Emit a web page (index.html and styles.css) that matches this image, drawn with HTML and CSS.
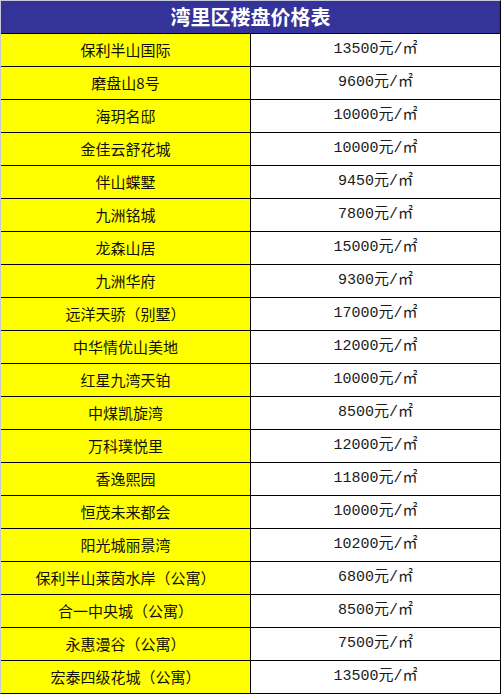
FILE: index.html
```html
<!DOCTYPE html>
<html lang="zh-CN">
<head>
<meta charset="utf-8">
<title>湾里区楼盘价格表</title>
<link rel="stylesheet" href="styles.css">
</head>
<body>
<div class="sheet">
  <div class="title">湾里区楼盘价格表</div>
  <div class="row"><div class="name">保利半山国际</div><div class="price">13500元/㎡</div></div>
  <div class="row"><div class="name">磨盘山8号</div><div class="price">9600元/㎡</div></div>
  <div class="row"><div class="name">海玥名邸</div><div class="price">10000元/㎡</div></div>
  <div class="row"><div class="name">金佳云舒花城</div><div class="price">10000元/㎡</div></div>
  <div class="row"><div class="name">伴山蝶墅</div><div class="price">9450元/㎡</div></div>
  <div class="row"><div class="name">九洲铭城</div><div class="price">7800元/㎡</div></div>
  <div class="row"><div class="name">龙森山居</div><div class="price">15000元/㎡</div></div>
  <div class="row"><div class="name">九洲华府</div><div class="price">9300元/㎡</div></div>
  <div class="row"><div class="name">远洋天骄（别墅）</div><div class="price">17000元/㎡</div></div>
  <div class="row"><div class="name">中华情优山美地</div><div class="price">12000元/㎡</div></div>
  <div class="row"><div class="name">红星九湾天铂</div><div class="price">10000元/㎡</div></div>
  <div class="row"><div class="name">中煤凯旋湾</div><div class="price">8500元/㎡</div></div>
  <div class="row"><div class="name">万科璞悦里</div><div class="price">12000元/㎡</div></div>
  <div class="row"><div class="name">香逸熙园</div><div class="price">11800元/㎡</div></div>
  <div class="row"><div class="name">恒茂未来都会</div><div class="price">10000元/㎡</div></div>
  <div class="row"><div class="name">阳光城丽景湾</div><div class="price">10200元/㎡</div></div>
  <div class="row"><div class="name">保利半山莱茵水岸（公寓）</div><div class="price">6800元/㎡</div></div>
  <div class="row"><div class="name">合一中央城（公寓）</div><div class="price">8500元/㎡</div></div>
  <div class="row"><div class="name">永惠漫谷（公寓）</div><div class="price">7500元/㎡</div></div>
  <div class="row"><div class="name">宏泰四级花城（公寓）</div><div class="price">13500元/㎡</div></div>
</div>
</body>
</html>
```
FILE: styles.css
```css
html, body {
  margin: 0;
  padding: 0;
  background: #ffffff;
}
.sheet {
  width: 501px;
  box-sizing: border-box;
  border-top: 1px solid #c8c8dc;
  border-left: 1px solid #c8c8dc;
  border-right: 1px solid #000000;
  border-bottom: 1px solid #000000;
  display: flex;
  flex-direction: column;
}
.title {
  height: 32px;
  background: #333399;
  color: #ffffff;
  font-family: "Noto Sans CJK SC", sans-serif;
  font-weight: bold;
  font-size: 20px;
  line-height: 32px;
  text-align: center;
}
.row {
  display: grid;
  grid-template-columns: 250px 249px;
  height: 33px;
  box-sizing: border-box;
  border-top: 1px solid #000000;
}
.name {
  background: #ffff00;
  border-right: 1px solid #000000;
  color: #111100;
  font-family: "Noto Sans CJK SC", sans-serif;
  font-size: 15px;
  line-height: 32px;
  text-align: center;
  white-space: nowrap;
}
.price {
  background: #ffffff;
  color: #1a1a1a;
  font-family: "Liberation Mono", "Noto Sans CJK SC", monospace;
  font-size: 15px;
  line-height: 32px;
  text-align: center;
  white-space: nowrap;
}
```
